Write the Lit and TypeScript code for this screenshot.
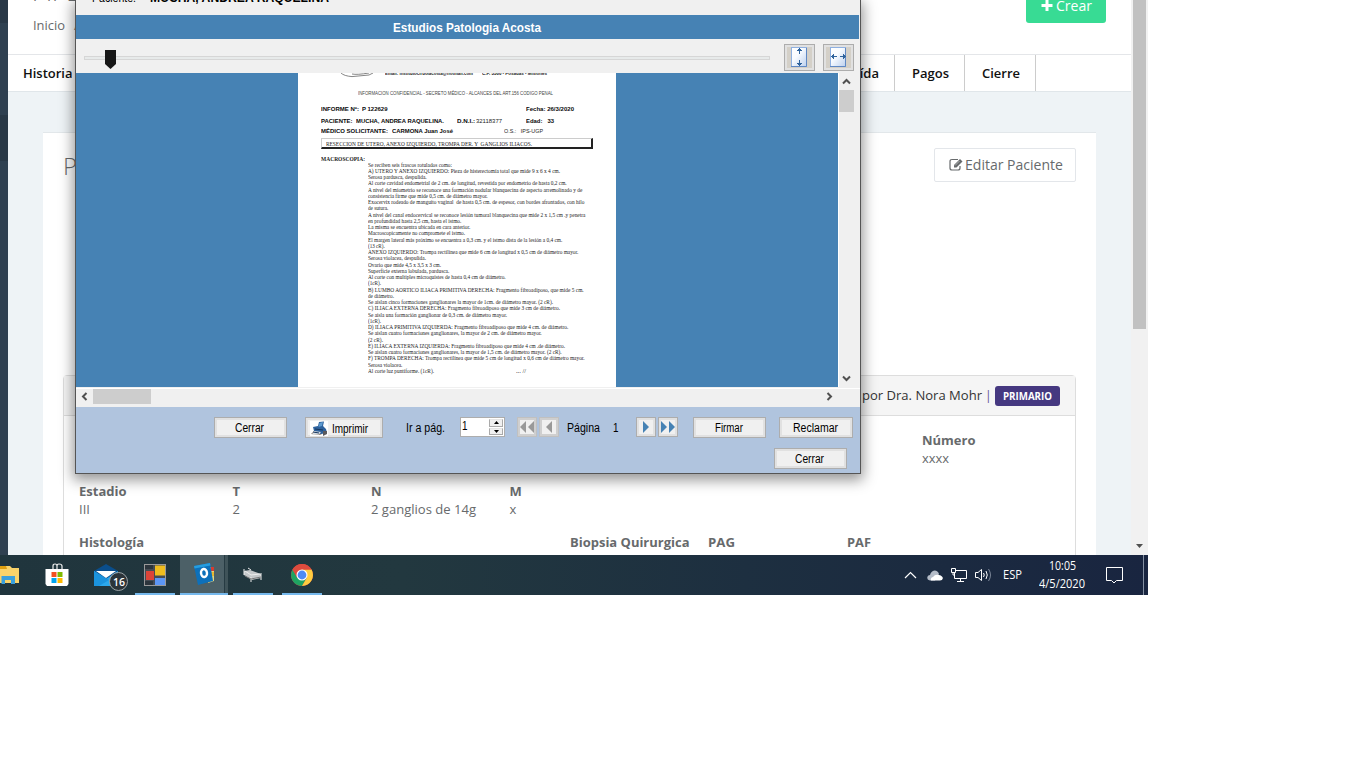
import { LitElement, html, css, svg } from "lit";
import { customElement, property, query } from "lit/decorators.js";

/** One line of text condensed or stretched to a given width. */
@customElement("fit-text")
class FitText extends LitElement {
  @property({ type: Number }) w = 0;
  @query(".t") span!: HTMLElement;
  static styles = css`
    :host { display: inline-block; white-space: pre; text-align: left; flex: none; }
    .t { display: inline-block; transform-origin: 0 50%; white-space: pre; }
  `;
  render() { return html`<span class="t"><slot></slot></span>`; }
  updated() {
    const n = this.span.offsetWidth ? this.span.getBoundingClientRect().width : 0;
    this.style.width = this.w + "px";
    if (n) this.span.style.transform = `scaleX(${this.w / n})`;
  }
}

const ft = (w: number, t: string) => html`<fit-text .w=${w}>${t}</fit-text>`;

const LINES: [number, string][] = [
  [84, "Se reciben seis frascos rotulados como:"],
  [192, "A) UTERO Y ANEXO IZQUIERDO: Pieza de histerectomía total que mide 9 x 6 x 4 cm."],
  [58.7, "Serosa pardusca, despulida."],
  [198.7, "Al corte cavidad endometrial de 2 cm. de longitud, revestida por endometrio de hasta 0,2 cm."],
  [214.3, "A nivel del miometrio se reconoce una formación nodular blanquecina de aspecto arremolinado y de"],
  [119.7, "consistencia firme que mide 0,5 cm. de diámetro mayor."],
  [216.3, "Exocervix rodeado de manguito vaginal  de hasta 0,5 cm. de espesor, con bordes afrontados, con hilo"],
  [20.3, "de sutura."],
  [217.3, "A nivel del canal endocervical se reconoce lesión tumoral blanquecina que mide 2 x 1,5 cm .y penetra"],
  [93.3, "en profundidad hasta 2,5 cm, hasta el istmo."],
  [102.3, "La misma se encuentra ubicada en cara anterior."],
  [97, "Macroscopicamente no compromete el istmo."],
  [194.3, "El margen lateral más próximo se encuentra a 0,3 cm. y el istmo dista de la lesión a 0,4 cm."],
  [16.7, "(13 cR)."],
  [210.3, "ANEXO IZQUIERDO: Trompa rectilínea que mide 6 cm de longitud x 0,5 cm de diámetro mayor."],
  [58, "Serosa violacea, despulida."],
  [73, "Ovario que mide 4,5 x 3,5 x 3 cm."],
  [81.3, "Superficie externa lobulada, pardusca."],
  [137.7, "Al corte con multiples microquistes de hasta 0,4 cm de diámetro."],
  [13, "(1cR)."],
  [215.7, "B) LUMBO AORTICO ILIACA PRIMITIVA DERECHA: Fragmento fibroadiposo, que mide 5 cm."],
  [26, "de diámetro."],
  [185, "Se aislan cinco formaciones ganglionares la mayor de 1cm. de diámetro mayor. (2 cR)."],
  [192, "C) ILIACA EXTERNA DERECHA: Fragmento fibroadiposo que mide 3 cm de diámetro."],
  [139, "Se aisla una formación ganglionar de 0,3 cm. de diámetro mayor."],
  [13, "(1cR)."],
  [200.3, "D) ILIACA PRIMITIVA IZQUIERDA: Fragmento fibroadiposo que mide 4 cm. de diámetro."],
  [173.7, "Se aislan cuatro formaciones ganglionares, la mayor de 2 cm. de diámetro mayor."],
  [15, "(2 cR)."],
  [197, "E) ILIACA EXTERNA IZQUIERDA: Fragmento fibroadiposo que mide 4 cm .de diámetro."],
  [193.7, "Se aislan cuatro formaciones ganglionares, la mayor de 1,5 cm. de diámetro mayor. (2 cR)."],
  [216.7, "F) TROMPA DERECHA: Trompa rectilínea que mide 5 cm de longitud x 0,6 cm de diámetro mayor."],
  [34.3, "Serosa violacea."],
];

@customElement("report-page")
class ReportPage extends LitElement {
  static styles = css`
    :host { display: block; width: 318px; height: 314px; background: #fff; color: #1c1c1c; overflow: hidden;
      font: 6px/8px "Liberation Sans", sans-serif; }
    .row { display: flex; height: 8px; }
    .head { height: 6px; margin-top: -4px; color: #222; font-size: 5px; line-height: 8px; align-items: flex-start; font-weight: bold; }
    .logo { margin: 4px 0 0 41px; flex: none; }
    .m1 { margin-left: 10px; } .m2 { margin-left: 9px; }
    .conf { margin: 13.5px 0 0 60px; font-size: 5.2px; color: #444; }
    b { font-weight: bold; color: #0a0a0a; font-size: 6.2px; }
    .r1 { margin: 8.3px 0 0 23.3px; } .r2 { margin: 3.8px 0 0 23.3px; } .r3 { margin: 2.5px 0 0 23.3px; }
    .g1 { margin-left: 3px; } .g2 { margin-left: 138px; } .g3 { margin-left: 13px; }
    .g4 { margin-left: 24px; } .g5 { margin-left: 51px; } .g6 { margin-left: 4px; } .g0 { margin-left: 1px; }
    .box { margin: 2.5px 0 0 23px; width: 265px; height: 8.5px; border: 1px solid #ccc; border-right: 2px solid #222;
      border-bottom: 2px solid #222; font: 6.2px/9px "Liberation Serif", serif; padding-left: 4px; }
    .macro { margin: 5.5px 0 0 23.3px; font: bold 6px/8px "Liberation Serif", serif; height: 6.5px; }
    .body { margin: .5px 0 0 69.7px; font: 5.7px/6.25px "Liberation Serif", serif; }
    .l { height: 6.25px; display: flex; }
    .end { margin-left: 82px; }
  `;
  render() {
    return html`
      <div class="row head">
        <svg class="logo" width="36" height="5" viewBox="0 0 36 5"><path d="M2 0Q5 3 13 3.600L30 2L34 0M13 1Q18 2 30 0" fill="none" stroke="#777" stroke-width=".9"/></svg>
        <span class="m1">${ft(88, "Email: institutociruolacosta@hotmail.com")}</span>
        <span class="m2">${ft(65, "C.P. 3300 - Posadas - Misiones")}</span>
      </div>
      <div class="row conf">${ft(195, "INFORMACION CONFIDENCIAL - SECRETO MÉDICO - ALCANCES DEL ART.156 CODIGO PENAL")}</div>
      <div class="row r1"><b>${ft(38, "INFORME Nº:")}</b><b class="g1">${ft(25.5, "P 122629")}</b><b class="g2">${ft(48, "Fecha: 26/3/2020")}</b></div>
      <div class="row r2"><b>${ft(31.5, "PACIENTE:")}</b><b class="g1">${ft(88, "MUCHA, ANDREA RAQUELINA.")}</b><b class="g3">${ft(18, "D.N.I.:")}</b><span class="g0">${ft(26, "32118377")}</span><b class="g4">${ft(28, "Edad:   33")}</b></div>
      <div class="row r3"><b>${ft(67, "MÉDICO SOLICITANTE:")}</b><b class="g6">${ft(61, "CARMONA Juan José")}</b><span class="g5">${ft(39, "O.S.:   IPS-UGP")}</span></div>
      <div class="box">${ft(206, "RESECCION DE UTERO, ANEXO IZQUIERDO, TROMPA DER. Y  GANGLIOS ILIACOS.")}</div>
      <div class="macro">${ft(44, "MACROSCOPIA:")}</div>
      <div class="body">
        ${LINES.map(([w, t]) => html`<div class="l">${ft(w, t)}</div>`)}
        <div class="l">${ft(66, "Al corte luz puntiforme. (1cR).")}<span class="end">${ft(10, "... //")}</span></div>
      </div>`;
  }
}

const chev = (d: string) => html`<svg width="9" height="9" viewBox="0 0 9 9"><path d=${d} fill="none" stroke="#505050" stroke-width="2"/></svg>`;
const tri = (dir: "l" | "r", two: boolean, dis: boolean) => {
  const d = dir === "r" ? "M0 0L6 6L0 12Z" : "M6 0L0 6L6 12Z";
  const c = dis ? "#999" : "#4682b4";
  return html`<svg width=${two ? 14 : 6} height="12" viewBox="0 0 ${two ? 14 : 6} 12">
    <path d=${d} fill=${c}/>${two ? svg`<path d=${d} transform="translate(8 0)" fill=${c}/>` : ""}</svg>`;
};
const fitIcon = (v: boolean) => html`<svg width="25" height="21" viewBox="0 0 25 21">
  <defs><linearGradient id="g" x2="1" y2="1"><stop stop-color="#fff"/><stop offset=".4" stop-color="#f8fbff"/><stop offset="1" stop-color="#bcd0ee"/></linearGradient></defs>
  <rect width="25" height="21" fill="#d4d0c8"/><rect x="4.500" y=".500" width="15" height="19" fill="url(#g)" stroke="#8fb0e0"/><path d="M4 19.500H19.500V1" fill="none" stroke="#5f88c4"/>
  ${v ? svg`<path d="M12.500 1V7M12.500 13V19M10 3.500H15M10 16.500H15" stroke="#2f639c" fill="none"/><path d="M11 3H14V2H11ZM11 17H14V18H11Z" fill="#2f639c"/>`
      : svg`<path d="M5 9.500H11M14 9.500H20M7.500 7V12M17.500 7V12" stroke="#2f639c" fill="none"/><path d="M6 8H7V11H6ZM18 8H19V11H18Z" fill="#2f639c"/>`}</svg>`;

@customElement("viewer-dialog")
class ViewerDialog extends LitElement {
  static styles = css`
    :host { display: block; font: 12px/14px "Liberation Sans", sans-serif; color: #000; }
    .win { width: 784px; height: 473px; border: 1px solid #555; border-top: 0; background: #f0f0f0; overflow: hidden;
      display: flex; flex-direction: column; box-shadow: 0 4px 13px 2px rgba(0,0,0,.42); }
    .pat { height: 15px; display: flex; padding-left: 16px; gap: 14px; line-height: 14px; flex: none; box-sizing: border-box; }
    .pat > * { margin-top: -9px; }
    .bar { height: 24px; background: #4682b4; color: #fff; font-weight: bold; line-height: 26px; padding-left: 317px; margin-right: 1px; flex: none; }
    .tools { height: 34px; display: flex; flex: none; }
    .groove { width: 684px; height: 2px; border: 1px solid #d6d6d6; background: #e7eaea; margin: 17px 0 0 8px; position: relative; }
    .thumb { position: absolute; left: 20px; top: -7px; display: block; }
    .tb { width: 25px; height: 21px; padding: 2px; border: 1px solid #adadad; background: #e1e1e1; margin-top: 5px; display: flex; }
    .t1 { margin-left: 14px; } .t2 { margin-left: 8px; }
    .view { height: 314px; display: flex; background: #4682b4; flex: none; }
    .page { margin-left: 222px; width: 318px; }
    .vs { margin-left: auto; width: 21px; border-left: 1px solid #fff; background: #f0f0f0; }
    .vs .in { width: 15px; height: 100%; display: flex; flex-direction: column; align-items: center; }
    .up { height: 17px; display: flex; align-items: center; }
    .vt { width: 15px; height: 22px; background: #cdcdcd; }
    .dn { margin-top: auto; height: 18px; display: flex; align-items: center; }
    .hs { border-top: 1px solid #fff; flex: none; display: flex; align-items: flex-start; margin-top: 1px; box-sizing: border-box; height: 19px; }
    .hs svg { margin: 3px 4px 0 4px; } .ht { width: 58px; height: 15px; margin-top: 0; background: #cdcdcd; }
    .hs .rt { margin-left: auto; margin-right: 22px; display: flex; }
    .foot { flex: 1; background: #b0c4de; }
    .row { display: flex; padding-top: 10px; height: 21px; }
    .btn { height: 21px; border: 1px solid #adadad; background: #f0f0f0; box-shadow: inset 0 0 0 2px #e1e1e1; box-sizing: border-box;
      display: flex; align-items: center; justify-content: center; width: 73px; flex: none; padding: 1px 2px 0 0; }
    .sq { width: 20px; height: 20px; padding: 0; } .dis { border-color: #c0c0c0; box-shadow: inset 0 0 0 2px #cfcfcf; }
    .a { margin-left: 138px; } .b { margin-left: 18px; width: 78px; gap: 4px; justify-content: flex-start; padding-left: 4px; }
    .b fit-text { margin-top: 1px; }
    .lbl { line-height: 22px; }
    .c { margin-left: 23px; } .d { margin-left: 15px; } .e { margin-left: 12px; } .f { margin-left: 2px; } .g { margin-left: 8px; }
    .h { margin-left: 13px; } .i { margin-left: 17px; } .j { margin-left: 2px; } .k { margin-left: 15px; padding-right: 0; } .m { margin-left: 13px; width: 74px; padding-right: 0; }
    .spin { width: 45px; height: 20px; border: 1px solid #adadad; background: #fff; box-sizing: border-box; display: flex; justify-content: space-between; padding-left: 1px; line-height: 16px; }
    .arr { width: 14px; display: flex; flex-direction: column; gap: 1px; margin: 1px; }
    .arr span { flex: 1; border: 1px solid #aaa; border-top-color: #e5e5e5; background: #f0f0f0; display: flex; align-items: center; justify-content: center; }
    .last { display: flex; padding: 10px 0 0 698px; }
  `;
  render() {
    return html`<div class="win">
      <div class="pat"><span>${ft(44, "Paciente:")}</span><b>${ft(179, "MUCHA, ANDREA RAQUELINA")}</b></div>
      <div class="bar">${ft(148, "Estudios Patologia Acosta")}</div>
      <div class="tools">
        <div class="groove"><svg class="thumb" width="11" height="19" viewBox="0 0 11 19"><path d="M0 0H11V14L5.500 19L0 14Z" fill="#171717"/></svg></div>
        <div class="tb t1">${fitIcon(true)}</div><div class="tb t2">${fitIcon(false)}</div>
      </div>
      <div class="view"><report-page class="page"></report-page>
        <div class="vs"><div class="in"><div class="up">${chev("M1 6.500L4.500 3L8 6.500")}</div><div class="vt"></div><div class="dn">${chev("M1 2.500L4.500 6L8 2.500")}</div></div></div>
      </div>
      <div class="hs">${chev("M6.500 1L3 4.500L6.500 8")}<div class="ht"></div><span class="rt">${chev("M2.500 1L6 4.500L2.500 8")}</span></div>
      <div class="foot">
        <div class="row">
          <div class="btn a">${ft(29, "Cerrar")}</div>
          <div class="btn b"><svg width="18" height="15" viewBox="0 0 18 15"><rect width="18" height="15" fill="#fff"/>
            <path d="M1 13L4 10H12V13L10 14Z" fill="#8e8175"/><path d="M3 6L8 5L9 1L14 0.500L13 5L16 8L17 12L11 13L4 10Z" fill="#2d619c"/><path d="M9.500 2L13 1L12 5L8.500 6Z" fill="#5e9bd0"/><path d="M4 10L11 11L9 13.500H2Z" fill="#d8dde2"/><path d="M5 8L13 9M3 11L9 12" stroke="#16365e"/><path d="M13 10H17V13L13 15Z" fill="#5a5a5e"/></svg>${ft(36, "Imprimir")}</div>
          <div class="lbl c">${ft(39, "Ir a pág.")}</div>
          <div class="spin d"><span>${ft(5.500, "1")}</span><span class="arr"><span><svg width="5" height="3" viewBox="0 0 5 3"><path d="M2.500 0L5 3H0Z"/></svg></span><span><svg width="5" height="3" viewBox="0 0 5 3"><path d="M2.500 3L5 0H0Z"/></svg></span></span></div>
          <div class="btn sq dis e">${tri("l", true, true)}</div><div class="btn sq dis f">${tri("l", false, true)}</div>
          <div class="lbl g">${ft(33, "Página")}</div><div class="lbl h">${ft(5.500, "1")}</div>
          <div class="btn sq i">${tri("r", false, false)}</div><div class="btn sq j">${tri("r", true, false)}</div>
          <div class="btn k">${ft(28, "Firmar")}</div><div class="btn m">${ft(45, "Reclamar")}</div>
        </div>
        <div class="last"><div class="btn">${ft(29, "Cerrar")}</div></div>
      </div>
    </div>`;
  }
}

@customElement("task-bar")
class TaskBar extends LitElement {
  static styles = css`
    :host { display: flex; height: 40px; background: linear-gradient(90deg, #20353d 0%, #22383f 35%, #1d2f40 65%, #192540 100%); color: #fff;
      font: 12px/18px "Open Sans", sans-serif; overflow: hidden; }
    .apps { display: grid; grid-template-columns: repeat(7, 49px); margin-left: -17px; }
    .c { display: flex; flex-direction: column; align-items: center; }
    .c svg { margin-top: 8px; height: 24px; }
    .mail { align-items: flex-start; } .mail .ic { display: flex; align-items: flex-start; margin-left: 13px; }
    .mail svg { flex: none; margin-top: 7px; }
    .count { width: 17px; height: 17px; border: 1px solid #9aa3a6; border-radius: 50%; background: #2c3439; margin: 17px 0 0 -9px; flex: none;
      display: flex; justify-content: center; align-items: center; font-weight: 600; font-size: 11px; line-height: 16px; }
    .c.run::after { content: ""; width: 40px; height: 2px; background: #76b9ed; margin-top: auto; }
    .c.act { background: linear-gradient(90deg, #4c6067 44px, #263b43 44px 45px, #3f5359 45px); width: 48px; margin-left: 1px; }
    .c.act::after { width: 48px; }
    .tray { margin-left: auto; display: flex; align-items: center; }
    .x1 { margin-left: 10px; } .x2 { margin-left: 8px; } .x3 { margin-left: 8px; } .x4 { margin-left: 11px; }
    .clock { width: 50px; margin-left: 15px; display: flex; flex-direction: column; align-items: center; }
    .note { margin-left: 19px; } .desk { width: 1px; height: 40px; background: #8490a2; margin: 0 4px 0 20px; }
  `;
  render() {
    return html`
      <div class="apps">
        <div class="c"><svg width="24" viewBox="0 0 24 24"><path d="M0 3H14L16 5H23V20H0Z" fill="#f9d36a"/><path d="M0 3H10L11 6H0Z" fill="#dfa010"/><path d="M5.500 21V13H19V21H15V17H9V21Z" fill="#3aa0dc"/></svg></div>
        <div class="c"><svg width="24" viewBox="0 0 24 24"><path d="M8 6V3Q8 1 10 1Q12 1 12 3V6M12 6V3Q12 1 14 1Q17 1 17 3V6" fill="none" stroke="#eee" stroke-width="1.200"/><path d="M.500 6H23.500V21L22 23H2L.500 21Z" fill="#fff"/><path d="M6.500 9H11.500V14H6.500Z" fill="#f25022"/><path d="M12.500 9H17.500V14H12.500Z" fill="#7fba00"/><path d="M6.500 15H11.500V20H6.500Z" fill="#00a4ef"/><path d="M12.500 15H17.500V20H12.500Z" fill="#ffb900"/></svg></div>
        <div class="c mail"><div class="ic"><svg width="24" viewBox="0 0 24 24"><path d="M0 9L12 2L24 9V24H0Z" fill="#0a4e8c"/><path d="M0 9L12 17L24 9V24H0Z" fill="#2ba8ec"/><path d="M0 9L15 18L5 24H0Z" fill="#1b93dd"/><path d="M2 9H22L12 16Z" fill="#fff"/></svg><span class="count">${ft(12, "16")}</span></div></div>
        <div class="c run"><svg width="24" viewBox="0 0 24 24"><rect x="1.500" y="1.500" width="21" height="21" fill="#454c54" stroke="#999"/><rect x="3" y="8" width="8" height="9" fill="#dc4438"/><rect x="12" y="2.500" width="10" height="10" fill="#efbd1e"/><rect x="12" y="15" width="10" height="7" fill="#5c96f4"/><path d="M2 2H10V6H2ZM2 18H10V22H2Z" fill="#2c353c"/></svg></div>
        <div class="c run act"><svg width="24" viewBox="0 0 24 24"><path d="M18 4L22 5V18L16 20Z" fill="#e4d77f"/><path d="M19 4H22V8H19Z" fill="#d83b2f"/><path d="M19 9H22V13H19Z" fill="#e9b831"/><path d="M2 3L18 0L21 18L6 22Z" fill="#0d70ba"/><path d="M2 3L18 0L18.500 2.500L2.500 5.500Z" fill="#259de0"/><ellipse cx="12" cy="10" rx="3" ry="4" fill="none" stroke="#fff" stroke-width="2.400" transform="rotate(-8 12 10)"/></svg></div>
        <div class="c run"><svg width="24" viewBox="0 0 24 24"><path d="M3 8L9 7L20 11V15L11 17L3 12Z" fill="#c5c8ca"/><path d="M3 6V12M20 10V17M10 14V19M4 8L10 12L19 11M7 5L10 7" fill="none" stroke="#eee"/><path d="M4 13L10 16L20 14" stroke="#777" fill="none"/></svg></div>
        <div class="c run"><svg width="24" viewBox="0 0 24 24"><circle cx="12" cy="12" r="11" fill="#dd4b3e"/><path d="M2.500 6.500A11 11 0 0 0 12 23L16.800 14.800L7.200 14.800Z" fill="#1ea362"/><path d="M21.500 6.500A11 11 0 0 1 12 23L17 14.500L12 6.500Z" fill="#ffcd40"/><path d="M12 6.500H21.500A11 11 0 0 0 2.500 6.500L7.500 15Z" fill="#dd4b3e"/><circle cx="12" cy="12" r="5.500" fill="#fff"/><circle cx="12" cy="12" r="4.400" fill="#4c8bf5"/></svg></div>
      </div>
      <div class="tray">
        <svg width="13" height="8" viewBox="0 0 13 8"><path d="M1 7L6.500 1.500L12 7" fill="none" stroke="#fff" stroke-width="1.200"/></svg>
        <svg class="x1" width="16" height="11" viewBox="0 0 16 11"><path d="M3 10.500Q0 10 .300 7Q1 5 3 5Q4 1 7.500 .500Q11 .500 12 4L8 10.500Z" fill="#b4bcc8"/><path d="M4 10.500Q3 8 6 7Q8 4 12 5Q16 6 15.800 8.500Q15.500 10.500 13 10.500Z" fill="#fff"/></svg>
        <svg class="x2" width="16" height="14" viewBox="0 0 16 14"><path d="M5 2.500H15.500V10.500H3.500V5M9.500 10.500V13M6 13.500H13M.500 .500H4.500V4.500H.500ZM2 4.500V7H4" fill="none" stroke="#fff"/></svg>
        <svg class="x3" width="17" height="14" viewBox="0 0 17 14"><path d="M.500 4.500H3L6.500 1.500V12.500L3 9.500H.500ZM8.500 5Q10 7 8.500 9M11 3Q13.500 7 11 11" fill="none" stroke="#fff"/><path d="M13.500 1Q17.500 7 13.500 13" fill="none" stroke="#7b8698"/></svg>
        <span class="x4">${ft(19, "ESP")}</span>
        <div class="clock">${ft(27, "10:05")}${ft(46, "4/5/2020")}</div>
        <svg class="note" width="17" height="17" viewBox="0 0 17 17"><path d="M.500 .500H16.500V13.500H10.500L8 16L5.500 13.500H.500Z" fill="none" stroke="#fff"/></svg>
        <div class="desk"></div>
      </div>`;
  }
}

@customElement("app-root")
class AppRoot extends LitElement {
  static styles = css`
    :host { display: block; width: 1360px; height: 768px; background: #fff; overflow: hidden; font: 13px/18px "Open Sans", sans-serif; color: #676a6c; }
    .desktop { width: 1148px; height: 595px; position: relative; }
    .browser { display: flex; height: 555px; overflow: hidden; }
    .side { width: 8px; background: linear-gradient(#293846 23px, #2f4050 23px 115px, #293846 115px 161px, #2f4050 161px); }
    .main { width: 1123px; background: #eef3f6; display: flex; flex-direction: column; }
    .head { height: 54px; background: #fff; border-bottom: 1px solid #e4e6e9; display: flex; justify-content: space-between; flex: none; }
    .crumb { padding-left: 25px; }
    h2 { margin: -25px 0 8px -1px; font-size: 24px; line-height: 33px; font-weight: 300; }
    .bc { display: flex; gap: 9px; }
    .crear { width: 80px; height: 23px; margin-right: 25px; border-radius: 0 0 3px 3px; background: #38db94; color: #fff; font-size: 14px; font-weight: 500; display: flex; justify-content: center; gap: 3px; line-height: 12px; }
    .tabs { height: 36px; background: #fff; border-bottom: 1px solid #e0e6ea; display: flex; color: #111; line-height: 36px; flex: none; font-weight: 550; }
    .tab { border-right: 1px solid #ccc; padding: 0 15px 0 17px; box-sizing: border-box; }
    .tf { width: 816px; padding-left: 15px; } .t0 { width: 71px; text-align: right; padding: 0 15px 0 0; } .t1 { width: 70px; } .t2 { width: 71px; }
    .card { margin: 40px 35px 0; background: #fff; border-top: 1px solid #e2e7ea; padding: 15px 20px 0; flex: 1; }
    .top { display: flex; justify-content: space-between; height: 227px; }
    h1 { margin: 0; font-size: 24px; line-height: 36px; font-weight: 300; }
    .edit { width: 142px; height: 34px; box-sizing: border-box; border: 1px solid #e3e6ea; border-radius: 2px; display: flex; align-items: center; padding: 0 0 1px 14px; gap: 2px; font-size: 15px; }
    .edit fit-text { margin-top: -1px; }
    .panel { border: 1px solid #ddd; border-radius: 4px 4px 0 0; height: 220px; }
    .ph { height: 39px; background: #f5f5f5; border-bottom: 1px solid #ddd; display: flex; justify-content: flex-end; align-items: center; padding-right: 15px; color: #333; gap: 3px; }
    .ph fit-text { margin-top: -1px; }
    .bar { color: #6a5a95; margin-top: -1px; }
    .badge { background: #453880; color: #fff; font-weight: 700; font-size: 10px; width: 65px; height: 20px; line-height: 23px; border-radius: 3px; display: flex; justify-content: center; }
    .rows { padding: 15px 15px 0; display: flex; flex-direction: column; gap: 15px; }
    .r { display: grid; height: 36px; }
    .r1 { padding-left: 842.5px; } .r2 { grid-template-columns: 153.500px 138.500px 138.500px auto; } .r3 { grid-template-columns: 490.500px 138.500px 138.500px auto; }
    .r b { display: block; }
    .sb { width: 17px; background: #f1f1f1; display: flex; flex-direction: column; align-items: center; justify-content: space-between; }
    .st { width: 13px; height: 329px; background: #c1c1c1; }
    .sb svg { margin-bottom: 7px; margin-right: 1px; }
    viewer-dialog { position: absolute; left: 75px; top: 0; }
  `;
  render() {
    return html`<div class="desktop">
      <div class="browser">
        <div class="side"></div>
        <div class="main">
          <div class="head">
            <div class="crumb"><h2>PIPE</h2><div class="bc">${ft(32, "Inicio")}<span>/</span></div></div>
            <div class="crear"><svg width="12" height="12" viewBox="0 0 12 12"><path d="M6 0V11M.500 5.500H11.500" stroke="#fff" stroke-width="3"/></svg>${ft(36, "Crear")}</div>
          </div>
          <div class="tabs"><div class="tab tf">${ft(49.500, "Historia")}</div><div class="tab t0">Recaída</div><div class="tab t1">${ft(37, "Pagos")}</div><div class="tab t2">${ft(38, "Cierre")}</div></div>
          <div class="card">
            <div class="top"><h1>P</h1><div class="edit"><svg width="14" height="13" viewBox="0 0 14 13"><path d="M9 1.500H3Q1 1.500 1 3.500V10Q1 12 3 12H9Q11 12 11 10V8" fill="none" stroke="#676a6c" stroke-width="1.200"/><path d="M5 9.500V7L11 1L13.500 3.500L7.500 9.500Z" fill="#676a6c"/><path d="M6 7.500L10.500 3" stroke="#ddd" stroke-width=".600"/></svg>${ft(98, "Editar Paciente")}</div></div>
            <div class="panel">
              <div class="ph">${ft(120, "por Dra. Nora Mohr")}<span class="bar">|</span><span class="badge">${ft(49, "PRIMARIO")}</span></div>
              <div class="rows">
                <div class="r r1"><div><b>${ft(53.500, "Número")}</b>${ft(27, "xxxx")}</div></div>
                <div class="r r2"><div><b>${ft(47.500, "Estadio")}</b>III</div><div><b>T</b>2</div><div><b>N</b>${ft(105, "2 ganglios de 14g")}</div><div><b>M</b>x</div></div>
                <div class="r r3"><b>${ft(65, "Histología")}</b><b>${ft(119.500, "Biopsia Quirurgica")}</b><b>${ft(27, "PAG")}</b><b>${ft(24, "PAF")}</b></div>
              </div>
            </div>
          </div>
        </div>
        <div class="sb"><div class="st"></div><svg width="7" height="4" viewBox="0 0 7 4"><path d="M0 0H7L3.500 4Z" fill="#505050"/></svg></div>
      </div>
      <task-bar></task-bar>
      <viewer-dialog></viewer-dialog>
    </div>`;
  }
}
